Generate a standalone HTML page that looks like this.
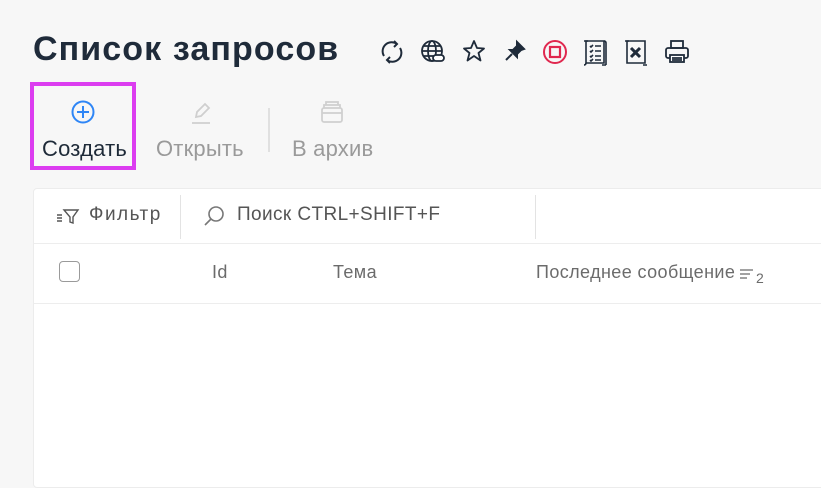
<!DOCTYPE html>
<html><head><meta charset="utf-8"><style>
*{margin:0;padding:0;box-sizing:border-box}
body{width:821px;height:467px;overflow:hidden;background:#f7f7f7;font-family:"Liberation Sans",sans-serif;position:relative;color:#1e2a38}
.a{position:absolute}
h1{position:absolute;left:33px;top:30px;font-size:34px;font-weight:700;color:#1f2b3a;letter-spacing:1.1px;white-space:nowrap}
.ic{position:absolute;top:38px}
.btn{position:absolute;font-size:22px;white-space:nowrap;letter-spacing:0.2px}
.g{color:#9a9a9a}
.panel{position:absolute;left:33px;top:188px;width:800px;height:300px;background:#fff;border:1px solid #ececec;border-radius:4px}
.t{position:absolute;font-size:19px;color:#555;white-space:nowrap;letter-spacing:0.4px}
.h{position:absolute;font-size:18px;color:#6b6b6b;white-space:nowrap;letter-spacing:0.4px}
</style></head><body>
<h1>Список запросов</h1>
<svg class="ic" style="left:378px" width="28" height="28" viewBox="0 0 28 28" fill="none" stroke="#1f2b3a" stroke-width="2"><path d="M6 18A9 9 0 0 1 19 6M22 10A9 9 0 0 1 9 22"/><path d="M16 3l3 3-3 3M12 25l-3-3 3-3"/></svg>
<svg class="ic" style="left:419px" width="28" height="28" viewBox="0 0 28 28" fill="none" stroke="#1f2b3a" stroke-width="1.8"><circle cx="13" cy="13" r="10"/><ellipse cx="13" cy="13" rx="4" ry="10"/><path d="M3 13h20M5 8h16M5 18h10"/><rect x="14" y="17" width="11" height="6" rx="3" fill="#fff"/></svg>
<svg class="ic" style="left:461px" width="26" height="26" viewBox="0 0 26 26" fill="none" stroke="#1f2b3a" stroke-width="1.8" stroke-linejoin="round"><path d="M13 3l3 7 7 .5-5.5 4.5 2 7.5L13 18l-6.5 4.5 2-7.5L3 10.5l7-.5z"/></svg>
<svg class="ic" style="left:502px" width="26" height="26" viewBox="0 0 26 26" fill="none" stroke="#1f2b3a" stroke-width="2"><path d="M15 4l7 7-3 1-4 4 0 3-7-7 3 0 4-4z" fill="#1f2b3a"/><path d="M10 16l-6 6"/></svg>
<svg class="ic" style="left:541px" width="28" height="28" viewBox="0 0 28 28" fill="none" stroke="#e0284f" stroke-width="2"><circle cx="14" cy="14" r="11"/><rect x="9" y="9" width="10" height="10" stroke-width="2.2"/></svg>
<svg class="ic" style="left:581px" width="28" height="30" viewBox="0 0 28 30" fill="none" stroke="#1f2b3a" stroke-width="1.6"><path d="M5 3h18v22H5z"/><path d="M3 3h4M21 27h4M5 25c0 2-2 2-2 2M23 3c0-0 2 0 2 2v22"/><path d="M9 8l1 1 2-2M9 13l1 1 2-2M9 18l1 1 2-2M9 22l1 1 2-2M14 8h6M14 13h6M14 18h6M14 22h6"/></svg>
<svg class="ic" style="left:622px" width="28" height="30" viewBox="0 0 28 30" fill="none" stroke="#1f2b3a" stroke-width="1.6"><path d="M5 3h18v22H5z"/><path d="M3 3h4M21 27h4"/><path d="M9 10l9 9M18 10l-9 9" stroke-width="3"/></svg>
<svg class="ic" style="left:663px" width="28" height="28" viewBox="0 0 28 28" fill="none" stroke="#1f2b3a" stroke-width="1.8"><rect x="8" y="3" width="12" height="7"/><rect x="3" y="10" width="22" height="10" rx="2"/><rect x="7" y="17" width="14" height="7" fill="#fff"/><path d="M9 20h10M9 22h10"/></svg>

<div class="a" style="left:30px;top:82px;width:106px;height:88px;border:4px solid #dc3df0"></div>
<svg class="a" style="left:71px;top:100px" width="24" height="24" viewBox="0 0 24 24" fill="none" stroke="#2f86f6" stroke-width="2"><circle cx="12" cy="12" r="10.5"/><path d="M12 6v12M6 12h12"/></svg>
<div class="btn" style="left:42px;top:136px">Создать</div>
<svg class="a" style="left:188px;top:99px" width="26" height="26" viewBox="0 0 26 26" fill="none" stroke="#cfcfcf" stroke-width="1.8"><path d="M8 18l1-5 8-8 4 4-8 8z"/><path d="M4 24h18"/></svg>
<div class="btn g" style="left:156px;top:136px">Открыть</div>
<div class="a" style="left:268px;top:108px;width:2px;height:44px;background:#e0e0e0"></div>
<svg class="a" style="left:318px;top:99px" width="28" height="26" viewBox="0 0 28 26" fill="none" stroke="#d0d0d0" stroke-width="1.8"><rect x="4" y="9" width="20" height="14" rx="2"/><path d="M6 9V6h16v3M8 6V3h12v3M4 14h20"/></svg>
<div class="btn g" style="left:292px;top:136px">В архив</div>

<div class="panel">
<div class="a" style="left:0;top:54px;width:800px;height:1px;background:#ededed"></div>
<div class="a" style="left:0;top:114px;width:800px;height:1px;background:#ededed"></div>
<div class="a" style="left:146px;top:6px;width:1px;height:44px;background:#e3e3e3"></div>
<div class="a" style="left:501px;top:6px;width:1px;height:44px;background:#e3e3e3"></div>
<svg class="a" style="left:22px;top:17px" width="24" height="20" viewBox="0 0 24 20" fill="none" stroke="#555" stroke-width="1.4"><path d="M1 9h5M1 12h5M1 15h5"/><path d="M8 4h14l-5 7v6l-3-1v-5z"/></svg>
<div class="t" style="left:55px;top:15px;letter-spacing:1.5px">Фильтр</div>
<svg class="a" style="left:168px;top:15px" width="24" height="24" viewBox="0 0 24 24" fill="none" stroke="#777" stroke-width="1.6"><circle cx="14" cy="10" r="7"/><path d="M9 15l-6 6"/></svg>
<div class="t" style="left:203px;top:15px">Поиск CTRL+SHIFT+F</div>
<div class="a" style="left:25px;top:72px;width:21px;height:21px;border:1.3px solid #9a9a9a;border-radius:4px"></div>
<div class="h" style="left:178px;top:73px">Id</div>
<div class="h" style="left:299px;top:73px">Тема</div>
<div class="h" style="left:502px;top:73px">Последнее сообщение</div>
<svg class="a" style="left:706px;top:79px" width="14" height="14" viewBox="0 0 14 14" stroke="#6b6b6b" stroke-width="1.3"><path d="M0 2h13M0 6h10M0 10h7"/></svg>
<div class="a" style="left:722px;top:81px;font-size:14px;color:#6b6b6b">2</div>
</div>
</body></html>
